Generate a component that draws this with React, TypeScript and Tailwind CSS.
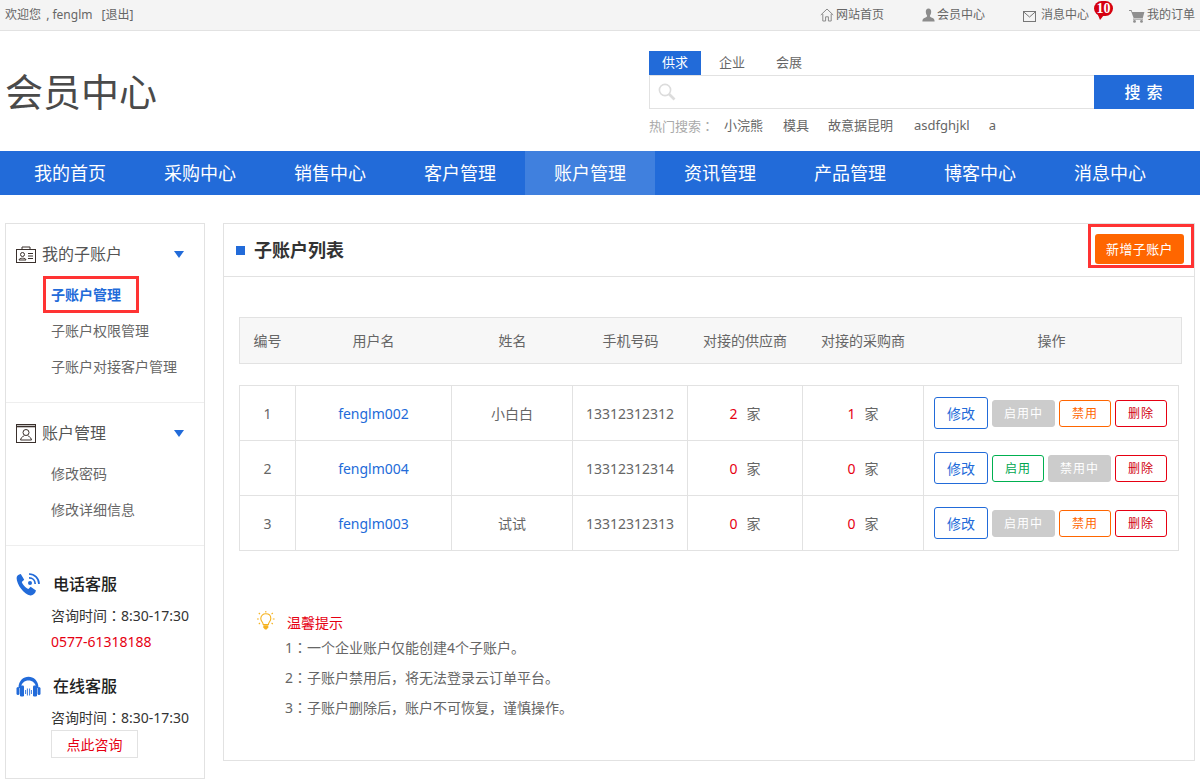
import React from "react";

const font = "font-['Noto_Sans','Noto_Sans_CJK_SC',sans-serif]";

function Colon() {
  return <span className="font-['Noto_Sans_CJK_TC',sans-serif]">：</span>;
}
function Comma() {
  return <span className="font-['Noto_Sans_CJK_KR',sans-serif]">，</span>;
}

function HomeIcon() {
  return (
    <svg width="14" height="14" viewBox="0 0 14 14" fill="none" stroke="#8a8a8a" strokeWidth="1" className="mr-[2px]">
      <path d="M0.8 7 L7 1 L13.2 7" />
      <path d="M2.8 6 V13 H5.6 V8.8 H8.4 V13 H11.2 V6" />
    </svg>
  );
}
function UserIcon() {
  return (
    <svg width="13" height="14" viewBox="0 0 13 14" fill="#8c8c8c" className="mr-[2px]">
      <path d="M6.5 0.5 C8.4 0.5 9.2 2 9.2 3.8 C9.2 5.6 8.3 7 7.9 7.8 C7.7 8.6 8.3 9.1 10 9.7 C11.8 10.3 12.6 11 12.6 13.5 H0.4 C0.4 11 1.2 10.3 3 9.7 C4.7 9.1 5.3 8.6 5.1 7.8 C4.7 7 3.8 5.6 3.8 3.8 C3.8 2 4.6 0.5 6.5 0.5 Z" />
    </svg>
  );
}
function MailIcon() {
  return (
    <svg width="13" height="11" viewBox="0 0 13 11" fill="none" stroke="#777" strokeWidth="1" className="mr-[5px] mt-[2px]">
      <rect x="0.5" y="0.5" width="12" height="10" />
      <path d="M0.8 1 L6.5 6 L12.2 1" />
    </svg>
  );
}
function CartIcon() {
  return (
    <svg width="16" height="14" viewBox="0 0 16 14" fill="#8f8f8f" className="mr-[2px] mt-[1px]">
      <path d="M0 1 H2.6 L3.2 3 H15.4 L13.8 9 H4.6 L2 2 H0 Z" />
      <rect x="4" y="9.6" width="10" height="1" />
      <circle cx="5.5" cy="12.4" r="1.4" />
      <circle cx="12.5" cy="12.4" r="1.4" />
    </svg>
  );
}
function SearchIcon() {
  return (
    <svg width="18" height="18" viewBox="0 0 18 18" fill="none" stroke="#dcdcdc" strokeWidth="1.6">
      <circle cx="7" cy="7" r="5.6" />
      <path d="M11 11 L16.5 16.5" strokeWidth="2.6" />
    </svg>
  );
}
function CardIcon() {
  return (
    <svg width="20" height="17" viewBox="0 0 20 17" fill="none" stroke="#3a302c" strokeWidth="1" className="mr-[6px] shrink-0">
      <rect x="0.5" y="3.5" width="19" height="13" />
      <path d="M6 3.5 V1 H14 V3.5" />
      <circle cx="6.5" cy="8.5" r="2" />
      <path d="M3 14 C3 11.6 10 11.6 10 14 Z" />
      <path d="M12 7.5 H17 M12 10 H17 M12 12.5 H17" />
    </svg>
  );
}
function AccountIcon() {
  return (
    <svg width="20" height="19" viewBox="0 0 20 19" fill="none" stroke="#3a302c" strokeWidth="1" className="mr-[6px] shrink-0">
      <rect x="0.5" y="0.5" width="19" height="18" />
      <path d="M0.5 2.5 H19.5" strokeWidth="1.6" />
      <circle cx="10" cy="8.5" r="3" />
      <path d="M4.5 16 C5 12.6 8 12.4 8.4 11.4 M15.5 16 C15 12.6 12 12.4 11.6 11.4 M4.5 16 H15.5" />
    </svg>
  );
}
function Triangle() {
  return <span className="ml-auto mr-[20px] h-0 w-0 border-x-[5px] border-t-[7px] border-x-transparent border-t-[#226bd9]" />;
}
function PhoneIcon() {
  return (
    <svg width="24" height="23" viewBox="0 0 24 23" fill="#226bd9" className="shrink-0">
      <path d="M0.6 5 C0.6 3 2.6 1.2 4.8 1 L8.2 6.8 L5.8 9 C6.6 11.4 9.6 15 12.4 16 L14.6 13.8 L20 17.6 C19.4 20.4 16.8 22.6 14.4 22.4 C8 21.8 0.6 11.4 0.6 5 Z" />
      <g fill="none" stroke="#226bd9" strokeWidth="1.7">
        <path d="M13 1 C18.6 1 23 5.2 23 11" />
        <path d="M13 4.8 C16.6 4.8 19.2 7.4 19.2 11" />
      </g>
      <circle cx="14" cy="10" r="2" />
    </svg>
  );
}
function Headset() {
  return (
    <svg width="25" height="21" viewBox="0 0 25 21" fill="#226bd9" className="shrink-0">
      <path d="M2.5 12 C2.5 -3 22.5 -3 22.5 12 H20 C20 2 5 2 5 12 Z" />
      <rect x="0.5" y="11" width="3" height="8" rx="1.5" />
      <rect x="4" y="9.5" width="4" height="11" rx="1.2" />
      <rect x="17" y="9.5" width="4" height="11" rx="1.2" />
      <rect x="21.5" y="11" width="3" height="8" rx="1.5" />
      <path d="M9.6 14 V18 M11.4 12.5 V19.5 M13.6 12.5 V19.5 M15.4 14 V18" stroke="#226bd9" strokeWidth="0.9" fill="none" />
    </svg>
  );
}
function Bulb() {
  return (
    <svg width="18" height="20" viewBox="0 0 18 20" fill="none" stroke="#f5b21f" strokeWidth="1.1">
      <path d="M6.2 13.5 C6 11 3.8 10.2 3.8 7.4 C3.8 4.6 6 2.8 8.8 2.8 C11.6 2.8 13.8 4.6 13.8 7.4 C13.8 10.2 11.6 11 11.4 13.5 Z" />
      <path d="M8.8 0 V1.6 M1.8 2 L3 3.2 M15.8 2 L14.6 3.2 M0 8 H1.8 M15.8 8 H17.6 M1.8 13 L3 12 M15.8 13 L14.6 12" />
      <path d="M6.3 14.2 H11.3 V16.6 L9.6 18.6 H8 L6.3 16.6 Z" fill="#f5b21f" stroke="none" />
    </svg>
  );
}

const navItems = ["我的首页", "采购中心", "销售中心", "客户管理", "账户管理", "资讯管理", "产品管理", "博客中心", "消息中心"];

type Btn = { label: string; cls: string };
const edit = "h-[32px] w-[54px] border-[#226bd9] text-[#226bd9] text-[14px]";
const small = "mt-[1px] h-[27px] tracking-[1px]";
const outline = `${small} w-[52px]`;
const enabling: Btn = { label: "启用中", cls: `${small} w-[63px] border-[#cccccc] bg-[#cccccc] text-white` };
const disabling: Btn = { label: "禁用中", cls: `${small} w-[63px] border-[#cccccc] bg-[#cccccc] text-white` };
const disable: Btn = { label: "禁用", cls: `${outline} border-[#ff6600] text-[#ff6600]` };
const enable: Btn = { label: "启用", cls: `${outline} border-[#00b050] text-[#00a650]` };
const del: Btn = { label: "删除", cls: `${outline} border-[#e60012] text-[#d00010]` };

const rows = [
  { n: "1", user: "fenglm002", name: "小白白", phone: "13312312312", a: "2", b: "1", btns: [enabling, disable, del] },
  { n: "2", user: "fenglm004", name: "", phone: "13312312314", a: "0", b: "0", btns: [enable, disabling, del] },
  { n: "3", user: "fenglm003", name: "试试", phone: "13312312313", a: "0", b: "0", btns: [enabling, disable, del] },
];

const cols = "grid grid-cols-[56px_156px_121px_115px_115px_121px_1fr]";
const cell = "flex items-center justify-center border-r border-[#e2e2e2]";

export default function App() {
  return (
    <div className={`${font} w-[1200px] h-[782px] overflow-hidden bg-white text-[#666666] text-[13px]`}>
      {/* top bar */}
      <div className="flex h-[31px] items-center justify-between border-b border-[#e2e2e2] bg-[#f4f4f4] pl-[5px] pr-[5px] text-[12px] text-[#666666]">
        <div className="flex">
          <span>欢迎您<span className="ml-[2px]"> , fenglm</span></span>
          <span className="ml-[9px]">[退出]</span>
        </div>
        <div className="flex items-center">
          <a className="flex items-center"><HomeIcon />网站首页</a>
          <a className="ml-[38px] flex items-center"><UserIcon />会员中心</a>
          <a className="relative ml-[38px] flex items-center">
            <MailIcon />消息中心
            <span className="absolute left-[71px] top-[-5px] flex h-[15px] w-[19px] items-center justify-center rounded-full bg-[#d5000f] font-['Liberation_Serif',serif] text-[14px] font-bold leading-none text-white">10</span>
            <span className="absolute left-[75px] top-[9px] h-0 w-0 border-l-[2px] border-r-[4px] border-t-[5px] border-x-transparent border-t-[#d5000f]" />
          </a>
          <a className="ml-[40px] flex items-center"><CartIcon />我的订单</a>
        </div>
      </div>

      {/* header */}
      <div className="flex h-[120px] justify-between pr-[6px]">
        <div className="flex items-center pl-[5px] text-[38px] leading-none text-[#4a4a4a]">会员中心</div>
        <div className="w-[545px] pt-[20px]">
          <div className="flex h-[24px] items-center text-[13px]">
            <span className="flex h-full w-[52px] items-center justify-center bg-[#226bd9] text-white">供求</span>
            <span className="flex h-full w-[62px] items-center justify-center">企业</span>
            <span className="flex h-full w-[52px] items-center justify-center">会展</span>
          </div>
          <div className="flex h-[34px]">
            <div className="flex flex-1 items-center border-y border-l-1 border-[#e2e2e2] pl-[8px]"><SearchIcon /></div>
            <div className="flex w-[100px] items-center justify-center bg-[#226bd9] text-[16px] font-medium tracking-[1px] text-white">搜 索</div>
          </div>
          <div className="mt-[8px] flex h-[18px] items-center text-[13px]">
            <span className="w-[75px] text-[#aaaaaa]">热门搜索<Colon /></span>
            <span>小浣熊</span>
            <span className="ml-[20px]">模具</span>
            <span className="ml-[19px]">故意据昆明</span>
            <span className="ml-[21px]">asdfghjkl</span>
            <span className="ml-[19px]">a</span>
          </div>
        </div>
      </div>

      {/* nav */}
      <div className="flex h-[44px] bg-[#226bd9] pl-[5px] text-[18px] text-white">
        {navItems.map((n, i) => (
          <div key={n} className={`flex w-[130px] items-center justify-center ${i === 4 ? "bg-[#4080de]" : ""}`}>{n}</div>
        ))}
      </div>

      {/* body */}
      <div className="mt-[28px] flex items-start gap-[18px] pl-[5px]">
        {/* sidebar */}
        <div className="h-[556px] w-[200px] border border-[#e2e2e2]">
          <div className="h-[179px] border-b border-[#eeeeee] pt-[19px]">
            <div className="flex h-[22px] items-center pl-[10px] text-[16px] text-[#555555]">
              <CardIcon />我的子账户<Triangle />
            </div>
            <div className="ml-[37px] mt-[11px] flex h-[37px] w-[96px] items-center border-[3px] border-[#ff3333] pl-[5px] text-[14px] font-bold text-[#226bd9]">子账户管理</div>
            <div className="-mt-[1px] pl-[45px] text-[14px]">
              <div className="flex h-[36px] items-center">子账户权限管理</div>
              <div className="flex h-[36px] items-center">子账户对接客户管理</div>
            </div>
          </div>
          <div className="h-[143px] border-b border-[#eeeeee] pt-[19px]">
            <div className="flex h-[22px] items-center pl-[10px] text-[16px] text-[#555555]">
              <AccountIcon />账户管理<Triangle />
            </div>
            <div className="mt-[11px] pl-[45px] text-[14px]">
              <div className="flex h-[36px] items-center">修改密码</div>
              <div className="flex h-[36px] items-center">修改详细信息</div>
            </div>
          </div>
          <div className="pl-[10px] pt-[25px] text-[14px] text-[#333333]">
            <div className="flex h-[26px] items-center">
              <PhoneIcon />
              <span className="ml-[13px] text-[16px] font-medium text-[#222222]">电话客服</span>
            </div>
            <div className="mt-[5px] flex h-[26px] items-center pl-[35px]">咨询时间<Colon />8:30-17:30</div>
            <div className="flex h-[26px] items-center pl-[35px] text-[#e60012]">0577-61318188</div>
            <div className="mt-[19px] flex h-[26px] items-center">
              <Headset />
              <span className="ml-[12px] text-[16px] font-medium text-[#222222]">在线客服</span>
            </div>
            <div className="mt-[5px] flex h-[26px] items-center pl-[35px]">咨询时间<Colon />8:30-17:30</div>
            <div className="ml-[35px] flex h-[28px] w-[87px] items-center justify-center border border-[#e2e2e2] text-[#e60012]">点此咨询</div>
          </div>
        </div>

        {/* main */}
        <div className="h-[538px] w-[972px] border border-[#e2e2e2]">
          <div className="flex h-[53px] items-start justify-between border-b border-[#e2e2e2]">
            <div className="flex h-[52px] items-center pl-[12px] text-[18px] font-bold text-[#333333]">
              <span className="mr-[9px] h-[9px] w-[9px] bg-[#226bd9]" />子账户列表
            </div>
            <div className="flex h-[44px] w-[106px] items-start border-[3px] border-[#ff3333] pl-[4px] pt-[7px]">
              <div className="flex h-[30px] w-[89px] items-center justify-center rounded-[3px] bg-[#ff6600] pt-[1px] text-[13px] tracking-[0.4px] text-white">新增子账户</div>
            </div>
          </div>

          <div className="pl-[15px] pt-[40px]">
            <div className={`${cols} h-[47px] w-[943px] items-center border border-[#e2e2e2] bg-[#f7f7f7] text-center text-[14px]`}>
              <span className="pr-[1px]">编号</span>
              <span className="pr-[1px]">用户名</span>
              <span>姓名</span>
              <span>手机号码</span>
              <span className="pr-[1px]">对接的供应商</span>
              <span className="pr-[1px]">对接的采购商</span>
              <span className="pr-[2px]">操作</span>
            </div>

            <div className="mt-[21px] w-[940px] border-l border-t border-[#e2e2e2] text-[14px]">
              {rows.map((r) => (
                <div key={r.n} className={`${cols} h-[55px] border-b border-[#e2e2e2]`}>
                  <div className={cell}>{r.n}</div>
                  <div className={`${cell} text-[#226bd9]`}>{r.user}</div>
                  <div className={cell}>{r.name}</div>
                  <div className={cell}>{r.phone}</div>
                  <div className={cell}><span className="mr-[9px] text-[#e60012]">{r.a}</span>家</div>
                  <div className={cell}><span className="mr-[9px] text-[#e60012]">{r.b}</span>家</div>
                  <div className="flex items-center gap-[4px] border-r border-[#e2e2e2] pl-[10px]">
                    <div className={`flex items-center justify-center rounded-[3px] border ${edit}`}>修改</div>
                    {r.btns.map((b) => (
                      <div key={b.label} className={`flex items-center justify-center rounded-[3px] border text-[12px] ${b.cls}`}>{b.label}</div>
                    ))}
                  </div>
                </div>
              ))}
            </div>

            <div className="mt-[58px] pl-[18px]">
              <div className="flex h-[24px] items-center">
                <Bulb />
                <span className="ml-[12px] mt-[3px] text-[14px] text-[#e60012]">温馨提示</span>
              </div>
              <div className="-mt-[1px] pl-[28px] text-[14px] text-[#666666]">
                <div className="flex h-[30px] items-center">1<Colon />一个企业账户仅能创建4个子账户。</div>
                <div className="flex h-[30px] items-center">2<Colon />子账户禁用后<Comma />将无法登录云订单平台。</div>
                <div className="flex h-[30px] items-center">3<Colon />子账户删除后<Comma />账户不可恢复<Comma />谨慎操作。</div>
              </div>
            </div>
          </div>
        </div>
      </div>
    </div>
  );
}
